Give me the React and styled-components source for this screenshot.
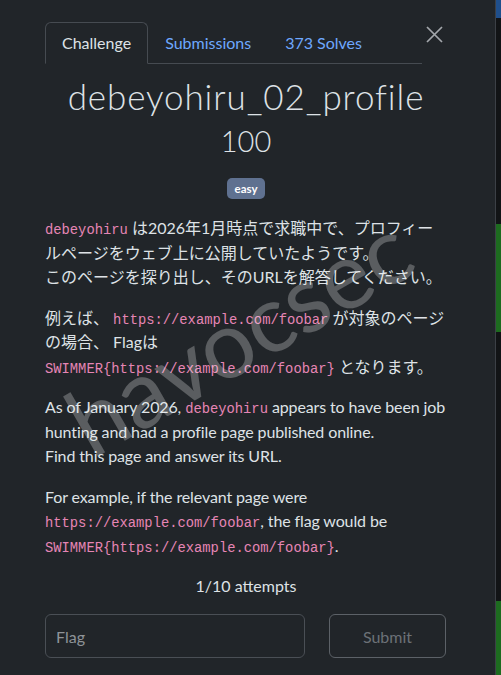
import React from 'react';
import styled, { createGlobalStyle } from 'styled-components';

const GlobalStyle = createGlobalStyle`
    html, body {
        margin: 0;
        padding: 0;
        background: #121416;
    }
    body {
        font-family: Lato, "Noto Sans CJK JP", sans-serif;
        color: #dee2e6;
        text-autospace: no-autospace;
    }
    * {
        box-sizing: border-box;
    }
`;

const stripSegments = [
    { color: '#1f4f8c', height: 18 },
    { color: '#121416', height: 206 },
    { color: '#1d6b1f', height: 108 },
    { color: '#121416', height: 269 },
    { color: '#1d6b1f', height: 74 },
];

function App() {
    return (
        <>
            <GlobalStyle />
            <Page>
                <Modal>
                    <Header>
                        <Tabs>
                            <Tab $active>Challenge</Tab>
                            <Tab>Submissions</Tab>
                            <Tab>373 Solves</Tab>
                        </Tabs>
                        <CloseButton aria-label="Close">
                            <svg width="17" height="17" viewBox="0 0 17 17">
                                <path d="M1 1 L16 16 M16 1 L1 16" stroke="#a3a7ab" strokeWidth="1.7" fill="none" />
                            </svg>
                        </CloseButton>
                    </Header>

                    <Body>
                        <Title>debeyohiru_02_profile</Title>
                        <Value>100</Value>
                        <Badge>easy</Badge>

                        <Description>
                            <p lang="ja">
                                <Code>debeyohiru</Code> は2026年1月時点で求職中で、プロフィールページをウェブ上に公開していたようです。
                                <br />
                                このページを探り出し、そのURLを解答してください。
                            </p>
                            <p lang="ja">
                                例えば、 <Code>https://example.com/foobar</Code> が対象のページの場合、 Flagは <Code>SWIMMER{'{'}https://example.com/foobar{'}'}</Code> となります。
                            </p>
                            <p lang="en">
                                As of January 2026, <Code>debeyohiru</Code> appears to have been job hunting and had a profile page published online.
                                <br />
                                Find this page and answer its URL.
                            </p>
                            <p lang="en">
                                For example, if the relevant page were <Code>https://example.com/foobar</Code>, the flag would be <Code>SWIMMER{'{'}https://example.com/foobar{'}'}</Code>.
                            </p>
                        </Description>

                        <Attempts>1/10 attempts</Attempts>

                        <SubmitRow>
                            <FlagInput placeholder="Flag" />
                            <SubmitButton disabled>Submit</SubmitButton>
                        </SubmitRow>
                    </Body>

                    <Watermark>havocsec</Watermark>
                </Modal>

                <Strip>
                    {stripSegments.map((seg, i) => (
                        <Segment key={i} $color={seg.color} style={{ height: seg.height }} />
                    ))}
                </Strip>
            </Page>
        </>
    );
}

const Page = styled.div`
    display: flex;
    height: 675px;
    overflow: hidden;
`;

const Modal = styled.div`
    position: relative;
    flex: 1;
    background: #212529;
    border-right: 1px solid #3c4046;
    padding: 22px 48px 0 45px;
    overflow: hidden;
`;

const Header = styled.div`
    display: flex;
    align-items: flex-start;
    margin-right: 1px;
`;

const Tabs = styled.div`
    flex: 1;
    display: flex;
    border-bottom: 1px solid #464b51;
`;

const Tab = styled.div`
    padding: 8px 16px;
    margin-bottom: -1px;
    font-size: 16px;
    line-height: 24px;
    color: ${props => (props.$active ? '#dee2e6' : '#6ea8fe')};
    border: 1px solid ${props => (props.$active ? '#464b51' : 'transparent')};
    border-bottom-color: ${props => (props.$active ? '#212529' : 'transparent')};
    border-radius: 6px 6px 0 0;
    background: ${props => (props.$active ? '#212529' : 'transparent')};
`;

const CloseButton = styled.button`
    width: 24px;
    height: 24px;
    padding: 0;
    border: 0;
    background: transparent;
    display: flex;
    align-items: center;
    justify-content: center;
`;

const Body = styled.div`
    display: flex;
    flex-direction: column;
    align-items: center;
`;

const Title = styled.h2`
    margin: 11px 0 0;
    font-size: 35px;
    font-weight: 300;
    line-height: 43px;
    letter-spacing: 0.9px;
    color: #dee2e6;
`;

const Value = styled.h3`
    margin: 6px 0 0;
    font-size: 29px;
    font-weight: 300;
    line-height: 34px;
    color: #dee2e6;
`;

const Badge = styled.span`
    margin-top: 20px;
    padding: 0 8px;
    height: 21px;
    line-height: 21px;
    font-size: 11.5px;
    font-weight: 700;
    color: #fff;
    background: #5f7190;
    border-radius: 5px;
`;

const Description = styled.div`
    align-self: stretch;
    margin-top: 17px;
    font-size: 16px;
    line-height: 24.5px;

    p {
        margin: 0 0 16px;
    }

    p:lang(en) {
        letter-spacing: -0.12px;
    }
`;

const Code = styled.code`
    font-family: "Liberation Mono", "Courier New", monospace;
    font-size: 13.8px;
    line-height: 1;
    letter-spacing: 0;
    color: #e685b5;
`;

const Attempts = styled.div`
    margin-top: 0;
    font-size: 16px;
    line-height: 24px;
`;

const SubmitRow = styled.div`
    align-self: stretch;
    display: grid;
    grid-template-columns: 260px 117px;
    gap: 24px;
    margin-top: 16px;
`;

const FlagInput = styled.input`
    height: 44px;
    padding: 0 10px;
    font-family: Lato, sans-serif;
    font-size: 16px;
    color: #dee2e6;
    background: #212529;
    border: 1px solid #4a4f55;
    border-radius: 6px;
    outline: none;

    &::placeholder {
        color: #8e9398;
    }
`;

const SubmitButton = styled.button`
    height: 44px;
    font-family: Lato, sans-serif;
    font-size: 16px;
    color: #6c7177;
    background: transparent;
    border: 1px solid #5c6167;
    border-radius: 6px;
`;

const Watermark = styled.div`
    position: absolute;
    left: 238px;
    top: 334px;
    transform: translate(-50%, -50%) rotate(-30deg);
    font-family: Lato, sans-serif;
    font-size: 94px;
    line-height: 1;
    color: rgba(255, 255, 255, 0.26);
    white-space: nowrap;
    pointer-events: none;
`;

const Strip = styled.div`
    width: 5px;
    display: flex;
    flex-direction: column;
`;

const Segment = styled.div`
    flex-shrink: 0;
    background: ${props => props.$color};
`;

export default App;
